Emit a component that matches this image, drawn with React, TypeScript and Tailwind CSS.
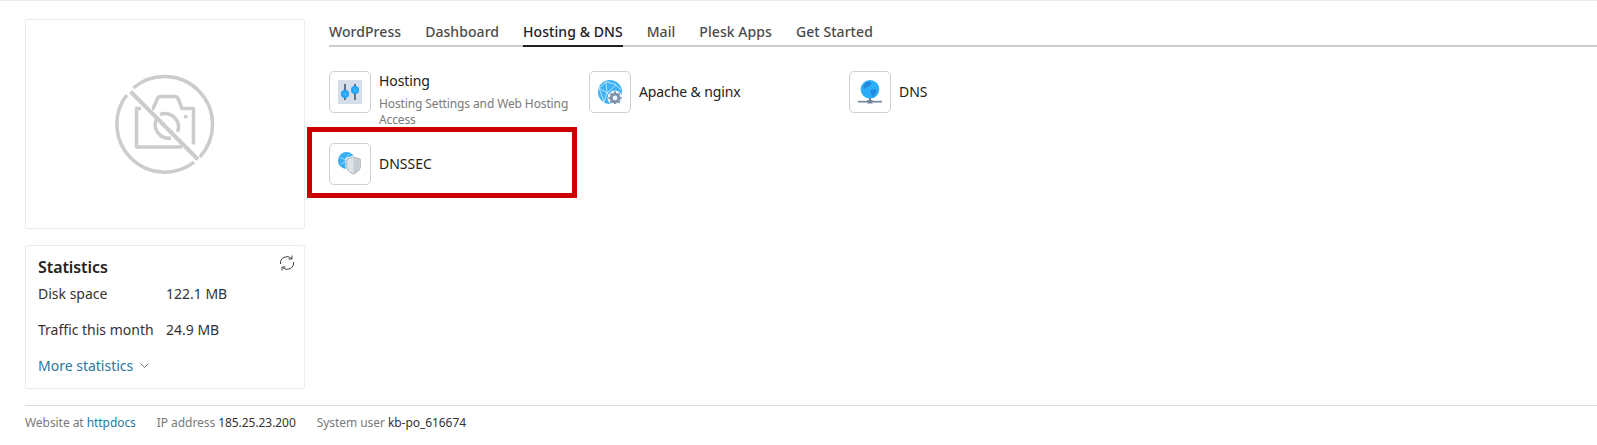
import React from "react";

function HostingIcon() {
  return (
    <svg width="24" height="24" viewBox="0 0 24 24">
      <rect width="24" height="24" fill="#d5dee8" />
      <path d="M7 4v16M17 4v16" stroke="#3f5870" strokeWidth="1.6" />
      <circle cx="7" cy="14" r="4" fill="#1c9ff8" />
      <circle cx="17" cy="10" r="4" fill="#1c9ff8" />
      <circle cx="7" cy="14" r="2.400" fill="#35b0ff" />
      <circle cx="17" cy="10" r="2.400" fill="#35b0ff" />
    </svg>
  );
}

function ApacheIcon() {
  const cx = 17;
  const cy = 18;
  return (
    <svg width="24" height="24" viewBox="0 0 24 24">
      <circle cx="12" cy="12" r="12" fill="#3fb1f5" />
      <path d="M1 8l7-6 9 2 6 6M1 8l8 5 9-8M8 2l1 11-3 9M9 13l7 6M1 8l5 14" stroke="#c4e9fd" strokeWidth="0.900" fill="none" />
      <circle cx={cx} cy={cy} r="7.500" fill="#e8f4fb" />
      <circle cx={cx} cy={cy} r="3.800" fill="none" stroke="#7f90a8" strokeWidth="2.800" />
      <path
        d={`M${cx} ${cy - 6.500}v2.500M${cx} ${cy + 4}v2.500M${cx - 6.500} ${cy}h2.500M${cx + 4} ${cy}h2.500M${cx - 4.600} ${cy - 4.600}l1.800 1.800M${cx + 2.800} ${cy + 2.800}l1.800 1.800M${cx - 4.600} ${cy + 4.600}l1.800 -1.800M${cx + 2.800} ${cy - 2.800}l1.800 -1.800`}
        stroke="#7f90a8"
        strokeWidth="2"
      />
    </svg>
  );
}

function DnsIcon() {
  return (
    <svg width="24" height="24" viewBox="0 0 24 24">
      <circle cx="12" cy="9.300" r="9.300" fill="#2badf8" />
      <path d="M7.500 2.500l4.500-1 1.500 2-2.500 3-2.500.5-1.500 2-2-2zM12.500 10l4.500-1 1.500 2-2 4-2.500 2-1-4z" fill="#2288dd" />
      <path d="M12 18v4" stroke="#6f8299" strokeWidth="2" />
      <rect x="0" y="20.800" width="24" height="1.800" fill="#7c8ea6" />
      <rect x="9.500" y="20" width="5" height="3.500" fill="#6f8299" />
    </svg>
  );
}

function DnssecIcon() {
  return (
    <svg width="24" height="24" viewBox="0 0 24 24">
      <circle cx="8.500" cy="8.500" r="8.500" fill="#3aaef3" />
      <path d="M2 5l5 3 4-6M3 12l5-3" stroke="#a9defc" strokeWidth="0.900" fill="none" />
      <path d="M15.500 3.500l8 2.800v8.200c0 4.300-4 7.200-8 9-4-1.800-8-4.700-8-9V6.300z" fill="#ffffff" />
      <path d="M15.500 5l6.800 2.200v7.300c0 3.600-3.400 6-6.800 7.600-3.400-1.600-6.800-4-6.800-7.600V7.200z" fill="#dfe3e6" stroke="#949ea6" strokeWidth="0.800" />
      <path d="M15.500 5.500l6.400 2v7c0 3.400-3.200 5.700-6.400 7.200z" fill="#c6cdd3" />
    </svg>
  );
}

function NoImage() {
  return (
    <svg width="100" height="100" viewBox="0 0 100 100" fill="none" stroke="#cccccc" strokeWidth="3.500">
      <path d="M11.700 21A48 48 0 0 0 79.100 88.200" />
      <path d="M18.300 14A48 48 0 0 1 84.900 82.900" />
      <path d="M15.500 17.500 83 85.500" strokeWidth="4" />
      <path d="M26 34.500H21.500V73H67" strokeLinejoin="round" />
      <path d="M37 34.500h1l4.500-10q1-2 3-2h14.500q2 0 3 2l4 10h11.500V70.500" strokeLinejoin="round" />
      <path d="M41.500 45A13.500 13.500 0 0 0 56 64" />
      <path d="M45 40.500A13.500 13.500 0 0 1 62.500 58" />
      <circle cx="70.700" cy="42.700" r="2" fill="#cccccc" stroke="none" />
    </svg>
  );
}

function Tile({
  icon,
  title,
  desc,
  titleClass,
}: {
  icon: React.ReactNode;
  title: string;
  desc?: string;
  titleClass?: string;
}) {
  return (
    <div className="mr-[5px] flex w-[255px] gap-2">
      <div className="flex h-[42px] w-[42px] shrink-0 items-center justify-center rounded-[5px] border border-[#d0d0d0] bg-white">
        {icon}
      </div>
      <div className={desc ? "" : "flex h-[42px] items-center"}>
        <div className={"text-[14px] leading-5 text-[#222222] " + (titleClass ?? "")}>{title}</div>
        {desc && <div className="mt-[5px] text-[12px] leading-4 tracking-[-0.12px] text-[#7a7a7a]">{desc}</div>}
      </div>
    </div>
  );
}

export default function App() {
  const tabs = ["WordPress", "Dashboard", "Hosting & DNS", "Mail", "Plesk Apps", "Get Started"];
  return (
    <div className="h-[445px] w-[1597px] overflow-hidden border-t border-[#ececec] bg-white pl-[25px]">
      <div className="font-['Noto_Sans','Open_Sans',sans-serif]">
        <div className="flex gap-6 pt-[18px]">
          <div className="w-[280px] shrink-0">
            <div className="flex h-[210px] items-center justify-center rounded-[2px] border border-[#ececec]">
              <NoImage />
            </div>
            <div className="relative mt-4 h-[144px] rounded-[2px] border border-[#ececec] px-3 pt-[11px] text-[14px] text-[#333333]">
              <svg
                className="absolute right-[9px] top-[9px]"
                width="16"
                height="16"
                viewBox="0 0 16 16"
                fill="none"
                stroke="#444444"
                strokeWidth="1"
              >
                <path d="M1.500 9A6.500 6.500 0 0 1 12.500 3.500" />
                <path d="M13 .5V4H9.500" />
                <path d="M14.500 7A6.500 6.500 0 0 1 3.500 12.500" />
                <path d="M3 15.500V12H6.500" />
              </svg>
              <div className="text-[16px] font-semibold leading-5 tracking-[-0.08px] text-[#222222]">Statistics</div>
              <div className="mt-[6px] flex h-5 items-center">
                <span className="w-[128px]">Disk space</span>
                <span>122.1 MB</span>
              </div>
              <div className="mt-4 flex h-5 items-center">
                <span className="w-[128px]">Traffic this month</span>
                <span>24.9 MB</span>
              </div>
              <div className="mt-4 flex h-5 items-center text-[#28789f]">
                More statistics
                <svg className="ml-[7px]" width="9" height="5" viewBox="0 0 9 5" fill="none" stroke="#777777" strokeWidth="1">
                  <path d="M.5.5l4 4 4-4" />
                </svg>
              </div>
            </div>
          </div>
          <div className="min-w-0 flex-1">
            <div className="flex h-[28px] items-start gap-6 border-b-2 border-[#cccccc] pt-[3px] text-[14px] font-medium tracking-[0.06px] text-[#4b4b4b]">
              {tabs.map((t) => (
                <div
                  key={t}
                  className={
                    t === "Hosting & DNS"
                      ? "-mb-[2px] h-[25px] border-b-2 border-[#222222] leading-5 text-[#222222]"
                      : "leading-5"
                  }
                >
                  {t}
                </div>
              ))}
            </div>
            <div className="mt-6 flex h-[72px] items-start">
              <Tile icon={<HostingIcon />} title="Hosting" desc="Hosting Settings and Web Hosting Access" titleClass="tracking-[-0.1px]" />
              <Tile icon={<ApacheIcon />} title="Apache & nginx" titleClass="tracking-[-0.12px]" />
              <Tile icon={<DnsIcon />} title="DNS" />
            </div>
            <div className="relative">
              <Tile icon={<DnssecIcon />} title="DNSSEC" />
              <div className="absolute -left-[22px] -top-[16px] h-[71px] w-[270px] border-[5px] border-[#cc0000]" />
            </div>
          </div>
        </div>
        <div className="mt-4 flex h-[34px] items-center gap-[21px] border-t border-[#dddddd] text-[12px] tracking-[-0.06px] text-[#7a7a7a]">
          <span>
            Website at <span className="text-[#28789f]">httpdocs</span>
          </span>
          <span>
            IP address <span className="text-[#333333]">185.25.23.200</span>
          </span>
          <span>
            System user <span className="text-[#333333]">kb-po_616674</span>
          </span>
        </div>
      </div>
    </div>
  );
}
